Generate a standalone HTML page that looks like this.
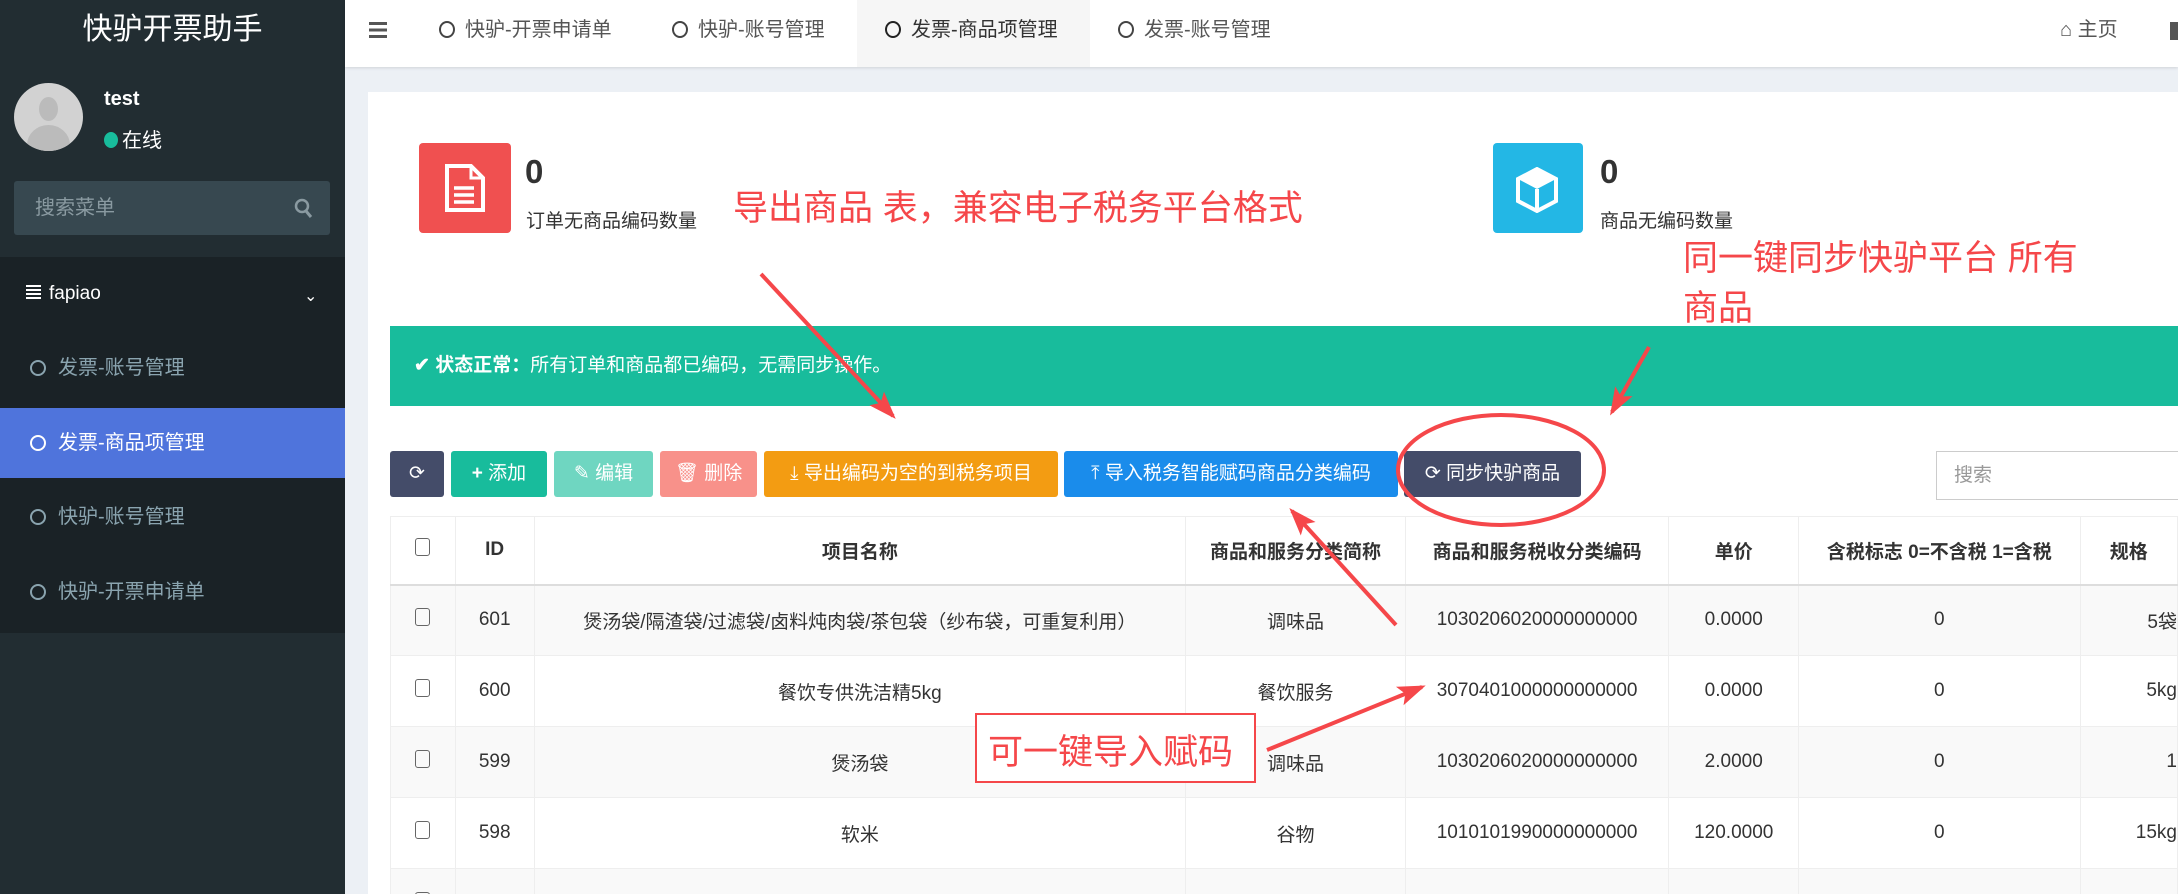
<!DOCTYPE html>
<html><head><meta charset="utf-8">
<style>
*{box-sizing:border-box;margin:0;padding:0}
html,body{width:2178px;height:894px;overflow:hidden}
body{background:#ecf0f5;font-family:"Liberation Sans","Noto Sans CJK SC",sans-serif;color:#333}
#wrap{position:relative;width:2178px;height:894px;overflow:hidden}
.abs{position:absolute}
#side{left:0;top:0;width:345px;height:894px;background:#222d32}
#menu{left:0;top:257px;width:345px;height:376px;background:#1a2226}
.mi{position:absolute;left:0;width:345px;height:70px;line-height:70px;padding-left:30px;font-size:20px;color:#8aa4af}
.mi .c{display:inline-block;width:16px;height:16px;border:2.5px solid #8aa4af;border-radius:50%;margin-right:12px;vertical-align:-2px}
#hdr{left:345px;top:0;width:1833px;height:67px;background:#fff;box-shadow:0 1px 3px rgba(0,0,0,.12)}
.tab{position:absolute;top:0;height:67px;line-height:60px;font-size:20px;color:#555}
.tab .c{display:inline-block;width:16px;height:17px;border:2.5px solid #444;border-radius:50%;margin-right:10px;vertical-align:-2px}
#box{left:368px;top:92px;width:1810px;height:802px;background:#fff}
.btn{position:absolute;top:451px;height:46px;line-height:46px;color:#fff;font-size:19px;border-radius:3px;text-align:center}
table{position:absolute;left:390px;top:516px;border-collapse:collapse;font-size:19px;table-layout:fixed}
td,th{border:1px solid #eee;text-align:center;white-space:nowrap;overflow:hidden;height:71px}
th{height:68px;font-weight:bold;border-bottom:2px solid #ddd}
tr.g td{background:#f9f9f9}
.cb{display:inline-block;width:15px;height:18px;border:1.5px solid #666;border-radius:3px}
.ann{color:#f5474a;font-size:35px;position:absolute}
</style></head><body><div id="wrap">
<div id="side" class="abs"></div>
<div class="abs" style="left:0;top:0;width:345px;height:67px;line-height:60px;text-align:center;color:#fff;font-size:30px">快驴开票助手</div>
<div class="abs" style="left:14px;top:83px;width:69px;height:68px;border-radius:50%;background:#d2d2d2;overflow:hidden">
<div class="abs" style="left:25px;top:14px;width:19px;height:24px;border-radius:50%;background:#bbb"></div>
<div class="abs" style="left:13px;top:42px;width:43px;height:40px;border-radius:50%;background:#bbb"></div></div>
<div class="abs" style="left:104px;top:88px;color:#fff;font-size:20px;font-weight:bold">test</div>
<div class="abs" style="left:104px;top:124px;color:#fff;font-size:20px"><span style="display:inline-block;width:14px;height:16px;border-radius:50%;background:#18bc9c;margin-right:4px;vertical-align:-1px"></span>在线</div>
<div class="abs" style="left:14px;top:181px;width:316px;height:54px;background:#374850;border-radius:3px;color:#8a9aa1;font-size:20px;line-height:54px;padding-left:21px">搜索菜单
<svg class="abs" style="right:16px;top:17px" width="20" height="22" viewBox="0 0 20 22"><circle cx="8" cy="8" r="6" fill="none" stroke="#8a9aa1" stroke-width="2.5"/><path d="M12 13l5 6" stroke="#8a9aa1" stroke-width="3"/></svg></div>
<div id="menu" class="abs"></div>
<div class="abs" style="left:26px;top:283px;color:#fff;font-size:19px"><span style="display:inline-block;width:15px;height:14px;background:repeating-linear-gradient(#fff 0 2px,transparent 2px 4px);margin-right:8px"></span>fapiao</div>
<div class="abs" style="left:304px;top:286px;color:#fff;font-size:16px">&#8964;</div>
<div class="mi" style="top:333px"><span class="c"></span>发票-账号管理</div>
<div class="mi" style="top:408px;background:#4f74dc;color:#fff"><span class="c" style="border-color:#fff"></span>发票-商品项管理</div>
<div class="mi" style="top:482px"><span class="c"></span>快驴-账号管理</div>
<div class="mi" style="top:557px"><span class="c"></span>快驴-开票申请单</div>

<div id="hdr" class="abs"></div>
<div class="abs" style="left:369px;top:22px;width:18px;height:16px;background:repeating-linear-gradient(#555 0 3px,transparent 3px 6.5px)"></div>
<div class="tab" style="left:439px"><span class="c"></span>快驴-开票申请单</div>
<div class="tab" style="left:672px"><span class="c"></span>快驴-账号管理</div>
<div class="abs" style="left:857px;top:0;width:233px;height:67px;background:#f6f6f6"></div>
<div class="tab" style="left:885px;color:#333"><span class="c" style="border-color:#222"></span>发票-商品项管理</div>
<div class="tab" style="left:1118px"><span class="c"></span>发票-账号管理</div>
<div class="tab" style="left:2060px;font-size:20px">&#8962; 主页</div>
<div class="abs" style="left:2170px;top:22px;width:8px;height:18px;background:#555"></div>

<div id="box" class="abs"></div>
<div class="abs" style="left:419px;top:143px;width:92px;height:90px;background:#f05050;border-radius:4px">
<svg class="abs" style="left:24px;top:21px" width="44" height="48" viewBox="0 0 44 48"><path d="M4 2h24l12 12v32H4z" fill="none" stroke="#fff" stroke-width="4"/><path d="M28 2v12h12" fill="none" stroke="#fff" stroke-width="3"/><path d="M11 24h20M11 31h20M11 38h20" stroke="#fff" stroke-width="3.5"/></svg></div>
<div class="abs" style="left:525px;top:153px;font-size:33px;font-weight:bold">0</div>
<div class="abs" style="left:526px;top:206px;font-size:19px">订单无商品编码数量</div>
<div class="abs" style="left:1493px;top:143px;width:90px;height:90px;background:#23b7e5;border-radius:4px">
<svg class="abs" style="left:21px;top:24px" width="46" height="46" viewBox="0 0 46 46"><path d="M23 2L42 12V34L23 44L4 34V12Z" fill="none" stroke="#fff" stroke-width="4"/><path d="M23 2L42 12L23 22L4 12Z" fill="#fff"/><path d="M23 22V44" stroke="#fff" stroke-width="4"/></svg></div>
<div class="abs" style="left:1600px;top:153px;font-size:33px;font-weight:bold">0</div>
<div class="abs" style="left:1600px;top:206px;font-size:19px">商品无编码数量</div>

<div class="abs" style="left:390px;top:326px;width:1788px;height:80px;background:#18bc9c;color:#fff;font-size:19px;line-height:80px;padding-left:24px"><b>&#10004; 状态正常：</b>所有订单和商品都已编码，无需同步操作。</div>

<div class="btn" style="left:390px;width:54px;background:#444c69">&#10227;</div>
<div class="btn" style="left:451px;width:96px;background:#18bc9c"><b>+</b> 添加</div>
<div class="btn" style="left:554px;width:99px;background:#6fd6c1">&#9998; 编辑</div>
<div class="btn" style="left:660px;width:97px;background:#f8918a">&#128465; 删除</div>
<div class="btn" style="left:764px;width:294px;background:#f39c12">&#10515; 导出编码为空的到税务项目</div>
<div class="btn" style="left:1064px;width:334px;background:#1a8ceb">&#10514; 导入税务智能赋码商品分类编码</div>
<div class="btn" style="left:1404px;width:177px;background:#444c69">&#10227; 同步快驴商品</div>
<div class="abs" style="left:1936px;top:451px;width:250px;height:49px;border:1px solid #ccc;font-size:19px;color:#999;line-height:47px;padding-left:17px">搜索</div>

<table>
<colgroup><col style="width:67px"><col style="width:81px"><col style="width:656px"><col style="width:222px"><col style="width:266px"><col style="width:132px"><col style="width:284px"><col style="width:100px"></colgroup>
<tr><th><span class="cb"></span></th><th>ID</th><th>项目名称</th><th>商品和服务分类简称</th><th>商品和服务税收分类编码</th><th>单价</th><th>含税标志 0=不含税 1=含税</th><th>规格</th></tr>
<tr class="g"><td><span class="cb"></span></td><td>601</td><td>煲汤袋/隔渣袋/过滤袋/卤料炖肉袋/茶包袋（纱布袋，可重复利用）</td><td>调味品</td><td>1030206020000000000</td><td>0.0000</td><td>0</td><td style="text-align:right">5袋</td></tr>
<tr><td><span class="cb"></span></td><td>600</td><td>餐饮专供洗洁精5kg</td><td>餐饮服务</td><td>3070401000000000000</td><td>0.0000</td><td>0</td><td style="text-align:right">5kg</td></tr>
<tr class="g"><td><span class="cb"></span></td><td>599</td><td>煲汤袋</td><td>调味品</td><td>1030206020000000000</td><td>2.0000</td><td>0</td><td style="text-align:right">1</td></tr>
<tr><td><span class="cb"></span></td><td>598</td><td>软米</td><td>谷物</td><td>1010101990000000000</td><td>120.0000</td><td>0</td><td style="text-align:right">15kg</td></tr>
<tr class="g"><td><span class="cb"></span></td><td>597</td><td>84消毒液2kg</td><td>环境污染处理剂</td><td>1070210000000000000</td><td>0.0000</td><td>0</td><td style="text-align:right">12kg</td></tr>
</table>

<div class="ann" style="left:733px;top:180px">导出商品 表，兼容电子税务平台格式</div>
<div class="ann" style="left:1683px;top:234px;line-height:50px">同一键同步快驴平台 所有<br>商品</div>
<div class="abs" style="left:975px;top:713px;width:281px;height:70px;border:2px solid #f5474a;background:#fff"></div>
<div class="ann" style="left:988px;top:724px">可一键导入赋码</div>

<svg class="abs" style="left:0;top:0" width="2178" height="894">
<defs><marker id="a" markerWidth="8" markerHeight="8" refX="6" refY="4" orient="auto" markerUnits="strokeWidth"><path d="M0 1.5L7 4L0 6.5L1.5 4z" fill="#f5474a"/></marker></defs>
<ellipse cx="1501" cy="470" rx="103" ry="55" fill="none" stroke="#f5474a" stroke-width="4"/>
<g stroke="#f5474a" stroke-width="4" fill="none" marker-end="url(#a)">
<line x1="761" y1="274" x2="893" y2="416"/>
<line x1="1649" y1="347" x2="1612" y2="412"/>
<line x1="1396" y1="625" x2="1292" y2="511"/>
<line x1="1267" y1="750" x2="1422" y2="687"/>
</g></svg>
</div></body></html>
